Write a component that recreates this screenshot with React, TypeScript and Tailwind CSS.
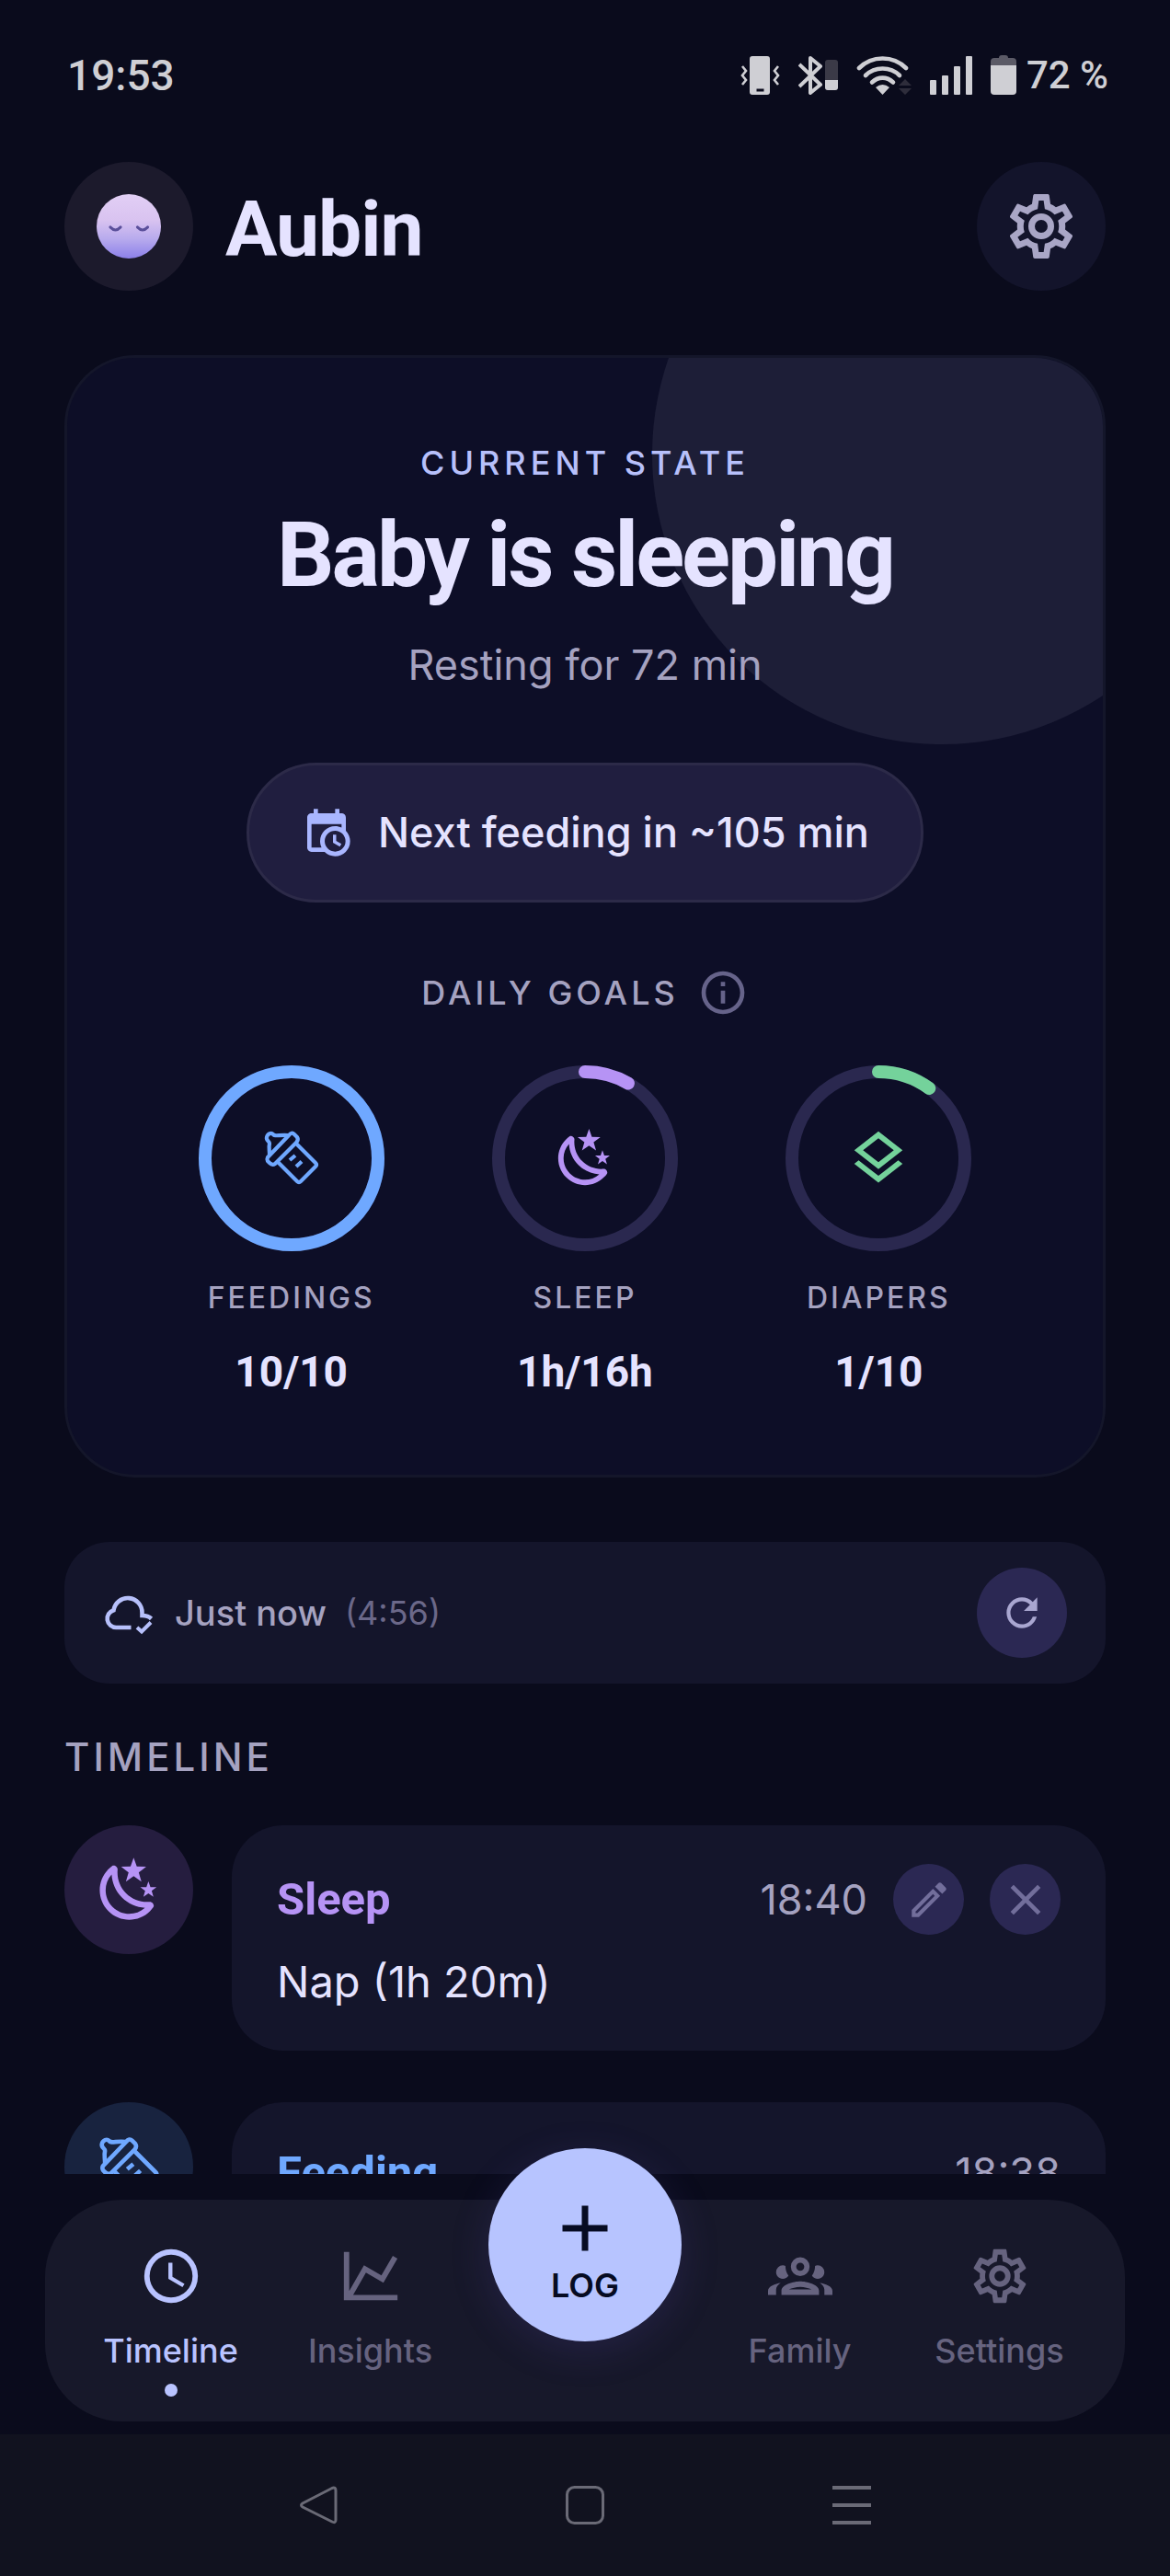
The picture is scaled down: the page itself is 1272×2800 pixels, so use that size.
import type { ReactNode } from "react";

const ICONS = {
  cog: "M12,8A4,4 0 0,1 16,12A4,4 0 0,1 12,16A4,4 0 0,1 8,12A4,4 0 0,1 12,8M12,10A2,2 0 0,0 10,12A2,2 0 0,0 12,14A2,2 0 0,0 14,12A2,2 0 0,0 12,10M10,22C9.75,22 9.54,21.82 9.5,21.58L9.13,18.93C8.5,18.68 7.96,18.34 7.44,17.94L4.95,18.95C4.73,19.03 4.46,18.95 4.34,18.73L2.34,15.27C2.21,15.05 2.27,14.78 2.46,14.63L4.57,12.97L4.5,12L4.57,11L2.46,9.37C2.27,9.22 2.21,8.95 2.34,8.73L4.34,5.27C4.46,5.05 4.73,4.96 4.95,5.05L7.44,6.05C7.96,5.66 8.5,5.32 9.13,5.07L9.5,2.42C9.54,2.18 9.75,2 10,2H14C14.25,2 14.46,2.18 14.5,2.42L14.87,5.07C15.5,5.32 16.04,5.66 16.56,6.05L19.05,5.05C19.27,4.96 19.54,5.05 19.66,5.27L21.66,8.73C21.79,8.95 21.73,9.22 21.54,9.37L19.43,11L19.5,12L19.43,13L21.54,14.63C21.73,14.78 21.79,15.05 21.66,15.27L19.66,18.73C19.54,18.95 19.27,19.04 19.05,18.95L16.56,17.95C16.04,18.34 15.5,18.68 14.87,18.93L14.5,21.58C14.46,21.82 14.25,22 14,22H10M11.25,4L10.88,6.61C9.68,6.86 8.62,7.5 7.85,8.39L5.44,7.35L4.69,8.65L6.8,10.2C6.4,11.37 6.4,12.64 6.8,13.8L4.68,15.36L5.43,16.66L7.86,15.62C8.63,16.5 9.68,17.14 10.87,17.38L11.24,20H12.76L13.13,17.39C14.32,17.14 15.37,16.5 16.14,15.62L18.57,16.66L19.32,15.36L17.2,13.81C17.6,12.64 17.6,11.37 17.2,10.2L19.31,8.65L18.56,7.35L16.15,8.39C15.38,7.5 14.32,6.86 13.12,6.62L12.75,4H11.25Z",
  moon: "M17.75,4.09L15.22,6.03L16.13,9.09L13.5,7.28L10.87,9.09L11.78,6.03L9.25,4.09L12.44,4L13.5,1L14.56,4L17.75,4.09M21.25,11L19.61,12.25L20.2,14.23L18.5,13.06L16.8,14.23L17.39,12.25L15.75,11L17.81,10.95L18.5,9L19.19,10.95L21.25,11M18.97,15.95C19.8,15.87 20.69,17.05 20.16,17.8C19.84,18.25 19.5,18.67 19.08,19.07C15.17,23 8.84,23 4.94,19.07C1.03,15.17 1.03,8.83 4.94,4.93C5.34,4.53 5.76,4.17 6.21,3.85C6.96,3.32 8.14,4.21 8.06,5.04C7.79,7.9 8.75,10.87 10.95,13.06C13.14,15.26 16.1,16.22 18.97,15.95M17.33,17.97C14.5,17.81 11.7,16.64 9.53,14.5C7.36,12.31 6.2,9.5 6.04,6.68C3.23,9.82 3.34,14.64 6.35,17.66C9.37,20.67 14.19,20.78 17.33,17.97Z",
  layers:
    "M12,18.54L19.37,12.8L21,14.07L12,21.07L3,14.07L4.62,12.81L12,18.54M12,16L3,9L12,2L21,9L12,16M12,4.53L6.26,9L12,13.47L17.74,9L12,4.53Z",
  calendar:
    "M15,13H16.5V15.82L18.94,17.23L18.19,18.53L15,16.69V13M19,8H5V19H9.67C9.24,18.09 9,17.07 9,16A7,7 0 0,1 16,9C17.07,9 18.09,9.24 19,9.67V8M5,21C3.89,21 3,20.1 3,19V5C3,3.89 3.89,3 5,3H6V1H8V3H16V1H18V3H19A2,2 0 0,1 21,5V11.1C22.24,12.36 23,14.09 23,16A7,7 0 0,1 16,23C14.09,23 12.36,22.24 11.1,21H5M16,11.15A4.85,4.85 0 0,0 11.15,16C11.15,18.68 13.32,20.85 16,20.85A4.85,4.85 0 0,0 20.85,16C20.85,13.32 18.68,11.15 16,11.15Z",
  info: "M11,9H13V7H11M12,20C7.59,20 4,16.41 4,12C4,7.59 7.59,4 12,4C16.41,4 20,7.59 20,12C20,16.41 16.41,20 12,20M12,2A10,10 0 0,0 2,12A10,10 0 0,0 12,22A10,10 0 0,0 22,12A10,10 0 0,0 12,2M11,17H13V11H11V17Z",
  refresh:
    "M17.65,6.35C16.2,4.9 14.21,4 12,4A8,8 0 0,0 4,12A8,8 0 0,0 12,20C15.73,20 18.84,17.45 19.73,14H17.65C16.83,16.33 14.61,18 12,18A6,6 0 0,1 6,12A6,6 0 0,1 12,6C13.66,6 15.14,6.69 16.22,7.78L13,11H20V4L17.65,6.35Z",
  pencil:
    "M14.06,9L15,9.94L5.92,19H5V18.08L14.06,9M17.66,3C17.41,3 17.15,3.1 16.96,3.29L15.13,5.12L18.88,8.87L20.71,7.04C21.1,6.65 21.1,6 20.71,5.63L18.37,3.29C18.17,3.09 17.92,3 17.66,3M14.06,6.19L3,17.25V21H6.75L17.81,9.94L14.06,6.19Z",
  close:
    "M19,6.41L17.59,5L12,10.59L6.41,5L5,6.41L10.59,12L5,17.59L6.41,19L12,13.41L17.59,19L19,17.59L13.41,12L19,6.41Z",
  plus: "M19,13H13V19H11V13H5V11H11V5H13V11H19V13Z",
  clock:
    "M12,20A8,8 0 0,0 20,12A8,8 0 0,0 12,4A8,8 0 0,0 4,12A8,8 0 0,0 12,20M12,2A10,10 0 0,1 22,12A10,10 0 0,1 12,22C6.47,22 2,17.5 2,12A10,10 0 0,1 12,2M12.5,7V12.25L17,14.92L16.25,16.15L11,13V7H12.5Z",
  chart:
    "M16,11.78L20.24,4.45L21.97,5.45L16.74,14.5L10.23,10.75L5.46,19H22V21H2V3H4V17.54L9.5,8L16,11.78Z",
  family:
    "M12,5A3.5,3.5 0 0,0 8.5,8.5A3.5,3.5 0 0,0 12,12A3.5,3.5 0 0,0 15.5,8.5A3.5,3.5 0 0,0 12,5M12,7A1.5,1.5 0 0,1 13.5,8.5A1.5,1.5 0 0,1 12,10A1.5,1.5 0 0,1 10.5,8.5A1.5,1.5 0 0,1 12,7M5.5,8A2.5,2.5 0 0,0 3,10.5C3,11.44 3.53,12.25 4.29,12.68C4.65,12.88 5.06,13 5.5,13C5.94,13 6.35,12.88 6.71,12.68C7.08,12.47 7.39,12.17 7.62,11.81C6.89,10.86 6.5,9.7 6.5,8.5C6.5,8.41 6.5,8.31 6.5,8.22C6.2,8.08 5.86,8 5.5,8M18.5,8C18.14,8 17.8,8.08 17.5,8.22C17.5,8.31 17.5,8.41 17.5,8.5C17.5,9.7 17.11,10.86 16.38,11.81C16.5,12 16.63,12.15 16.78,12.3C16.94,12.45 17.1,12.58 17.29,12.68C17.65,12.88 18.06,13 18.5,13C18.94,13 19.35,12.88 19.71,12.68C20.47,12.25 21,11.44 21,10.5A2.5,2.5 0 0,0 18.5,8M12,14C9.66,14 5,15.17 5,17.5V19H19V17.5C19,15.17 14.34,14 12,14M4.71,14.55C2.78,14.78 0,15.76 0,17.5V19H3V17.07C3,16.06 3.69,15.22 4.71,14.55M19.29,14.55C20.31,15.22 21,16.06 21,17.07V19H24V17.5C24,15.76 21.22,14.78 19.29,14.55M12,16C13.53,16 15.24,16.5 16.23,17H7.77C8.76,16.5 10.47,16 12,16Z",
};

type IconName = keyof typeof ICONS;

function Icon({ name, className }: { name: IconName; className: string }) {
  return (
    <svg viewBox="0 0 24 24" fill="currentColor" className={`shrink-0 ${className}`} aria-hidden>
      <path d={ICONS[name]} />
    </svg>
  );
}

function BottleIcon({ className }: { className: string }) {
  return (
    <svg
      viewBox="0 0 70 70"
      fill="none"
      stroke="currentColor"
      strokeWidth="4.2"
      strokeLinejoin="round"
      strokeLinecap="round"
      className={`shrink-0 ${className}`}
      aria-hidden
    >
      <path d="M21 40 41 60Q43 62 45 60L61 44Q63 42 61 40L41 20" />
      <path d="M9 34 32 10Q35 6 38 9L41 12Q43 15 40 18L17 41Q14 43 11 40L9 38Q8 36 9 34Z" />
      <path d="M11 31C11 26 10 23 11 19C11 16 7 16 8 12C9 8 13 7 15 9C17 12 22 9 31 10" />
      <path d="M33 37 39 32M40 44 46 38.500" strokeLinecap="butt" />
    </svg>
  );
}

function CloudCheckIcon({ className }: { className: string }) {
  return (
    <svg
      viewBox="0 0 56 56"
      fill="none"
      stroke="currentColor"
      strokeWidth="4.6"
      className={`shrink-0 ${className}`}
      aria-hidden
    >
      <path d="M30.5 44H14.5A9.6 9.6 0 0 1 11.5 25.2A15.6 15.6 0 0 1 42.5 28V31C47 31 50 32 52.5 34.5" />
      <path d="M37 44 42 48.5 52 38.5" strokeWidth="4" />
    </svg>
  );
}

function SleepyFace() {
  return (
    <svg viewBox="0 0 70 70" className="size-[70px]" role="img" aria-label="Sleeping baby">
      <defs>
        <linearGradient id="face" x1="0" y1="0" x2="0" y2="1">
          <stop offset="0" stopColor="#e2cff5" />
          <stop offset="0.4" stopColor="#d9c3f0" />
          <stop offset="0.7" stopColor="#b7aaed" />
          <stop offset="1" stopColor="#8c80ea" />
        </linearGradient>
      </defs>
      <circle cx="35" cy="35" r="35" fill="url(#face)" />
      <path
        d="M15 36Q20.5 42 26 36M44.5 36Q50 42 55.5 36"
        fill="none"
        stroke="#5a4f9a"
        strokeWidth="3.2"
        strokeLinecap="round"
      />
    </svg>
  );
}

function StatusBar() {
  return (
    <div className="flex h-[140px] shrink-0 items-center justify-between pt-6 pr-[67px] pl-[73px] font-['Roboto',sans-serif] font-medium text-[#cfcfd4]">
      <span className="text-[46px] leading-none">19:53</span>
      <div className="flex items-center gap-5">
        <svg viewBox="0 0 43 44" className="h-11 w-[43px]" fill="currentColor" aria-hidden>
          <path
            fillRule="evenodd"
            d="M13 1h16q3 0 3 3v36q0 3-3 3H13q-3 0-3-3V4q0-3 3-3ZM17.5 36.5v3h8v-3Z"
          />
          <path
            d="M2 12 6 17 2 22 6 27 2 32M41 12 37 17 41 22 37 27 41 32"
            fill="none"
            stroke="currentColor"
            strokeWidth="2.6"
          />
        </svg>
        <svg viewBox="0 0 43 44" className="h-11 w-[43px]" aria-hidden>
          <path
            d="M1 10 24 32 13 41V3L24 12 1 34"
            fill="none"
            stroke="currentColor"
            strokeWidth="4"
            strokeLinejoin="round"
          />
          <rect x="29" y="5" width="14" height="33" rx="3" fill="#3b3a47" />
          <path d="M29 27h14v8q0 3-3 3h-8q-3 0-3-3Z" fill="currentColor" />
        </svg>
        <svg viewBox="0 0 60 44" className="h-11 w-[60px]" aria-hidden>
          <g fill="none" stroke="currentColor" strokeWidth="4.6" strokeLinecap="round">
            <path d="M3 14C17 0 40 0 54 14" />
            <path d="M10 22C20 12 37 12 47 22" />
            <path d="M17 29.5C24 23 33 23 40 29.5" />
          </g>
          <path d="M28.5 43 21 35Q28.5 29 36 35Z" fill="currentColor" />
          <path d="M53 26 60 33H46ZM53 43 60 36H46Z" fill="#2e2d3b" />
        </svg>
        <svg viewBox="0 0 46 44" className="h-11 w-[46px]" fill="currentColor" aria-hidden>
          <rect x="0" y="27" width="7" height="16" rx="1" />
          <rect x="13" y="22" width="7" height="21" rx="1" />
          <rect x="26" y="12" width="7" height="31" rx="1" />
          <rect x="39" y="1" width="7" height="42" rx="1" />
        </svg>
        <div className="flex items-center gap-[11px]">
          <svg viewBox="0 0 28 44" className="h-11 w-7" aria-hidden>
            <path d="M9 3q0-3 3-3h4q3 0 3 3h5q4 0 4 4v5H0V7q0-4 4-4Z" fill="#5b5a66" />
            <path d="M0 11h28v28q0 4-4 4H4q-4 0-4-4Z" fill="currentColor" />
          </svg>
          <span className="text-[42px] leading-none">72 %</span>
        </div>
      </div>
    </div>
  );
}

interface GoalProps {
  label: string;
  value: string;
  progress: number;
  color: string;
  children: ReactNode;
}

function Goal({ label, value, progress, color, children }: GoalProps) {
  const length = 2 * Math.PI * 94;
  return (
    <div className="flex flex-col items-center">
      <div className={`grid size-[204px] place-items-center ${color}`}>
        <svg viewBox="0 0 204 204" className="col-start-1 row-start-1 size-full -rotate-90" fill="none" aria-hidden>
          <circle cx="102" cy="102" r="94" stroke="#2a284f" strokeWidth="14" />
          <circle
            cx="102"
            cy="102"
            r="94"
            stroke="currentColor"
            strokeWidth="14"
            strokeLinecap="round"
            strokeDasharray={`${length * progress} ${length}`}
          />
        </svg>
        <div className="col-start-1 row-start-1">{children}</div>
      </div>
      <span className="mt-7 text-[32px] leading-[44px] font-medium tracking-[3px] text-[#a5a2c0]">{label}</span>
      <span className="mt-7 font-['Roboto',sans-serif] text-[46px] leading-[60px] font-bold text-[#e5e3ff]">
        {value}
      </span>
    </div>
  );
}

function StateCard() {
  return (
    <section className="relative overflow-hidden rounded-[77px] border-[3px] border-[#14162a] bg-[#0d0e27] px-[84px] pt-[86px] pb-[82px]">
      <div className="absolute -top-[210px] -right-[140px] size-[630px] rounded-full bg-[#1d1e37]" />
      <div className="relative flex flex-col items-center">
        <p className="text-[36px] leading-[56px] font-medium tracking-[5px] text-[#b7c0fb]">CURRENT STATE</p>
        <h2 className="mt-[10px] font-['Roboto',sans-serif] text-[98px] leading-[126px] font-bold tracking-[-3px] text-[#e5e3ff]">
          Baby is sleeping
        </h2>
        <p className="mt-6 text-[45px] leading-[64px] text-[#a5a2c0]">Resting for 72 min</p>
        <div className="mt-[74px] flex h-[152px] items-center gap-7 rounded-full border-[3px] border-[#2c2a48] bg-[#201e3f] px-14">
          <Icon name="calendar" className="size-14 text-[#a9b6ff]" />
          <span className="text-[45px] font-medium text-[#e5e3ff]">Next feeding in ~105 min</span>
        </div>
        <div className="mt-[70px] flex items-center gap-5">
          <h3 className="text-[36px] leading-[56px] font-medium tracking-[4px] text-[#a5a2c0]">DAILY GOALS</h3>
          <button type="button" aria-label="About daily goals" className="text-[#66638a]">
            <Icon name="info" className="size-14" />
          </button>
        </div>
        <div className="mt-[50px] grid w-full grid-cols-3">
          <Goal label="FEEDINGS" value="10/10" progress={1} color="text-[#6fa8ff]">
            <BottleIcon className="size-[70px]" />
          </Goal>
          <Goal label="SLEEP" value="1h/16h" progress={80 / 960} color="text-[#b693f5]">
            <Icon name="moon" className="size-[70px]" />
          </Goal>
          <Goal label="DIAPERS" value="1/10" progress={0.1} color="text-[#74d29b]">
            <Icon name="layers" className="size-[70px]" />
          </Goal>
        </div>
      </div>
    </section>
  );
}

interface EntryProps {
  title: string;
  time: string;
  note?: string;
  titleColor: string;
  badge: string;
  editable?: boolean;
  children: ReactNode;
}

function TimelineEntry({ title, time, note, titleColor, badge, editable, children }: EntryProps) {
  return (
    <li className="flex items-start gap-[42px]">
      <div className={`flex size-[140px] shrink-0 items-center justify-center rounded-full ${badge}`}>{children}</div>
      <div className="flex-1 rounded-[56px] bg-[#14152b] px-[49px] pt-[42px] pb-10">
        <div className="flex items-center gap-7">
          <h4 className={`flex-1 font-['Roboto',sans-serif] text-[49px] leading-[70px] font-bold ${titleColor}`}>
            {title}
          </h4>
          <time className="text-[45px] leading-[56px] text-[#a5a2c0]">{time}</time>
          {editable && (
            <>
              <button
                type="button"
                aria-label="Edit entry"
                className="flex size-[77px] items-center justify-center rounded-full bg-[#2b2853] text-[#726e9b]"
              >
                <Icon name="pencil" className="size-[50px]" />
              </button>
              <button
                type="button"
                aria-label="Delete entry"
                className="flex size-[77px] items-center justify-center rounded-full bg-[#2b2853] text-[#726e9b]"
              >
                <Icon name="close" className="size-14" />
              </button>
            </>
          )}
        </div>
        {note && <p className="mt-4 text-[47px] leading-[70px] text-[#e5e3ff]">{note}</p>}
      </div>
    </li>
  );
}

function NavItem({ icon, label, active }: { icon: IconName; label: string; active?: boolean }) {
  return (
    <a
      href={`#${label.toLowerCase()}`}
      aria-current={active ? "page" : undefined}
      className={`flex flex-1 flex-col items-center ${active ? "text-[#b9c3ff]" : "text-[#66637f]"}`}
    >
      <Icon name={icon} className="size-[70px]" />
      <span className="mt-[18px] text-[36px] leading-[56px] font-medium">{label}</span>
      {active && <span className="mt-2 size-[14px] rounded-full bg-current" />}
    </a>
  );
}

function BottomNav() {
  return (
    <div className="relative shrink-0 px-[49px] pt-7 pb-[14px]">
      <nav className="flex h-[241px] rounded-[84px] bg-[#17182a] px-7 pt-12">
        <NavItem icon="clock" label="Timeline" active />
        <NavItem icon="chart" label="Insights" />
        <div className="w-[250px]" />
        <NavItem icon="family" label="Family" />
        <NavItem icon="cog" label="Settings" />
      </nav>
      <button
        type="button"
        className="absolute -top-7 left-1/2 flex size-[210px] -translate-x-1/2 flex-col items-center justify-center rounded-full bg-[#b7c4ff] pt-1 text-[#060b22] shadow-[0_10px_42px_rgba(80,70,160,0.22)]"
      >
        <Icon name="plus" className="size-[84px]" />
        <span className="text-[36px] leading-10 font-semibold">LOG</span>
      </button>
    </div>
  );
}

function SystemNav() {
  return (
    <div className="flex h-[154px] shrink-0 items-center justify-center gap-[248px] bg-[#11121f] text-[#6a6a76]">
      <button type="button" aria-label="Back">
        <svg viewBox="0 0 42 42" className="size-[42px]" fill="none" stroke="currentColor" strokeWidth="3" aria-hidden>
          <path d="M36 2.5Q40 1 40 5V37Q40 41 36 39L4 23Q1 21 4 19Z" />
        </svg>
      </button>
      <button type="button" aria-label="Home">
        <svg viewBox="0 0 42 42" className="size-[42px]" fill="none" stroke="currentColor" strokeWidth="3" aria-hidden>
          <rect x="1.5" y="1.5" width="39" height="39" rx="8" />
        </svg>
      </button>
      <button type="button" aria-label="Recent apps">
        <svg viewBox="0 0 42 42" className="size-[42px]" fill="none" stroke="currentColor" strokeWidth="4" aria-hidden>
          <path d="M0 2H42M0 21H42M0 40H42" />
        </svg>
      </button>
    </div>
  );
}

export default function App() {
  return (
    <div className="flex h-screen flex-col bg-[#0a0b1c] font-['Inter',sans-serif]">
      <StatusBar />
      <main className="flex min-h-0 flex-1 flex-col overflow-hidden px-[70px] pt-9">
        <header className="flex shrink-0 items-center gap-[35px]">
          <div className="flex size-[140px] items-center justify-center rounded-full bg-[#1c1a2c]">
            <SleepyFace />
          </div>
          <h1 className="flex-1 pt-2 font-['Roboto',sans-serif] text-[84px] leading-[112px] font-bold tracking-[-1px] text-[#e5e3ff]">
            Aubin
          </h1>
          <button
            type="button"
            aria-label="Open settings"
            className="flex size-[140px] items-center justify-center rounded-full bg-[#13142b] text-[#a9a6c6]"
          >
            <Icon name="cog" className="size-[84px]" />
          </button>
        </header>

        <div className="mt-[70px] shrink-0">
          <StateCard />
        </div>

        <section className="mt-[70px] flex shrink-0 items-center rounded-[49px] bg-[#14152b] px-[42px] py-7">
          <CloudCheckIcon className="size-14 text-[#b7c0fb]" />
          <span className="ml-[22px] text-[38px] font-medium text-[#a5a2c0]">Just now</span>
          <span className="ml-5 flex-1 text-[36px] text-[#6b6889]">(4:56)</span>
          <button
            type="button"
            aria-label="Refresh"
            className="flex size-[98px] items-center justify-center rounded-full bg-[#2b2853] text-[#a9a6d0]"
          >
            <Icon name="refresh" className="size-[50px]" />
          </button>
        </section>

        <h3 className="mt-[52px] shrink-0 text-[42px] leading-[56px] font-medium tracking-[4px] text-[#a5a2c0]">
          TIMELINE
        </h3>

        <ul className="mt-[46px] flex shrink-0 flex-col gap-14">
          <TimelineEntry
            title="Sleep"
            time="18:40"
            note="Nap (1h 20m)"
            titleColor="text-[#b693f5]"
            badge="bg-[#251d3f] text-[#b693f5]"
            editable
          >
            <Icon name="moon" className="size-[77px]" />
          </TimelineEntry>
          <TimelineEntry
            title="Feeding"
            time="18:38"
            titleColor="text-[#6fa8ff]"
            badge="bg-[#18233f] text-[#6fa8ff]"
          >
            <BottleIcon className="size-[77px]" />
          </TimelineEntry>
        </ul>
      </main>
      <BottomNav />
      <SystemNav />
    </div>
  );
}
